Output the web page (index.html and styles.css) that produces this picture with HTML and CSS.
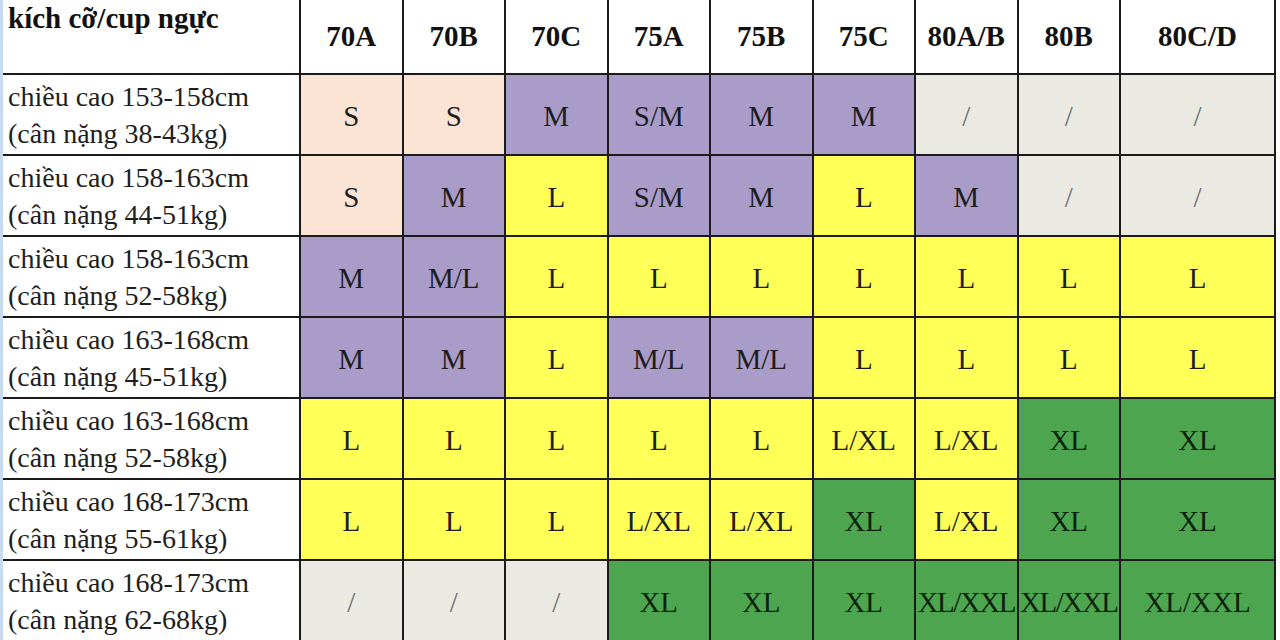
FILE: index.html
```html
<!DOCTYPE html>
<html lang="vi">
<head>
<meta charset="utf-8">
<title>Bảng size</title>
<link rel="stylesheet" href="styles.css">
</head>
<body>
<div class="sheet">
<table class="size-table">
<colgroup>
<col class="c-label">
<col class="c-n"><col class="c-n"><col class="c-n"><col class="c-n"><col class="c-n">
<col class="c-n"><col class="c-n"><col class="c-n"><col class="c-wide">
</colgroup>
<tr class="head">
<th class="corner">kích cỡ/cup ngực</th>
<th>70A</th><th>70B</th><th>70C</th><th>75A</th><th>75B</th><th>75C</th><th>80A/B</th><th>80B</th><th>80C/D</th>
</tr>
<tr>
<td class="label">chiều cao 153-158cm<br>(cân nặng 38-43kg)</td>
<td class="pe">S</td><td class="pe">S</td><td class="pu">M</td><td class="pu">S/M</td><td class="pu">M</td><td class="pu">M</td><td class="na">/</td><td class="na">/</td><td class="na">/</td>
</tr>
<tr>
<td class="label">chiều cao 158-163cm<br>(cân nặng 44-51kg)</td>
<td class="pe">S</td><td class="pu">M</td><td class="ye">L</td><td class="pu">S/M</td><td class="pu">M</td><td class="ye">L</td><td class="pu">M</td><td class="na">/</td><td class="na">/</td>
</tr>
<tr>
<td class="label">chiều cao 158-163cm<br>(cân nặng 52-58kg)</td>
<td class="pu">M</td><td class="pu">M/L</td><td class="ye">L</td><td class="ye">L</td><td class="ye">L</td><td class="ye">L</td><td class="ye">L</td><td class="ye">L</td><td class="ye">L</td>
</tr>
<tr>
<td class="label">chiều cao 163-168cm<br>(cân nặng 45-51kg)</td>
<td class="pu">M</td><td class="pu">M</td><td class="ye">L</td><td class="pu">M/L</td><td class="pu">M/L</td><td class="ye">L</td><td class="ye">L</td><td class="ye">L</td><td class="ye">L</td>
</tr>
<tr>
<td class="label">chiều cao 163-168cm<br>(cân nặng 52-58kg)</td>
<td class="ye">L</td><td class="ye">L</td><td class="ye">L</td><td class="ye">L</td><td class="ye">L</td><td class="ye">L/XL</td><td class="ye">L/XL</td><td class="gr">XL</td><td class="gr">XL</td>
</tr>
<tr>
<td class="label">chiều cao 168-173cm<br>(cân nặng 55-61kg)</td>
<td class="ye">L</td><td class="ye">L</td><td class="ye">L</td><td class="ye">L/XL</td><td class="ye">L/XL</td><td class="gr">XL</td><td class="ye">L/XL</td><td class="gr">XL</td><td class="gr">XL</td>
</tr>
<tr>
<td class="label">chiều cao 168-173cm<br>(cân nặng 62-68kg)</td>
<td class="na">/</td><td class="na">/</td><td class="na">/</td><td class="gr">XL</td><td class="gr">XL</td><td class="gr">XL</td><td class="gr tight">XL/XXL</td><td class="gr tight">XL/XXL</td><td class="gr">XL/XXL</td>
</tr>
</table>
</div>
</body>
</html>
```
FILE: styles.css
```css
html, body {
  margin: 0;
  padding: 0;
  background: #ffffff;
  overflow: hidden;
  height: 640px;
}

.sheet {
  display: flex;
  border-left: 3px solid #c6daf0;
  width: 1277px;
}

.size-table {
  border-collapse: collapse;
  table-layout: fixed;
  width: 1272px;
  font-family: "Liberation Serif", "Times New Roman", serif;
  color: #1e1e1e;
}

.c-label { width: 297px; }
.c-n { width: 102.5px; }
.c-wide { width: 155px; }

.size-table th,
.size-table td {
  border: 2px solid #1b1b1b;
  padding: 3px 0 0 0;
  text-align: center;
  vertical-align: middle;
  font-size: 29px;
  white-space: nowrap;
  overflow: visible;
}

.size-table tr:first-child th { border-top: none; }
.size-table tr > *:first-child { border-left: none; }

.head { height: 74px; }
.head th {
  font-weight: bold;
  font-size: 29px;
  padding: 0;
  background: #ffffff;
  color: #111111;
}

.head th.corner {
  text-align: left;
  vertical-align: top;
  padding: 2px 0 0 5px;
}

.size-table tr:not(.head) { height: 81px; }

.size-table td.label {
  text-align: left;
  padding: 0 0 0 5px;
  line-height: 37px;
  font-size: 28px;
  background: #ffffff;
  color: #1e1e1e;
}

.pe { background: #fbe4d4; }
.pu { background: #a99cc8; }
.ye { background: #ffff58; }
.gr { background: #4da64f; color: #0c220c; }
.na { background: #ebeae2; color: #707070; font-size: 26px; }
.tight { letter-spacing: -1.5px; }
```
